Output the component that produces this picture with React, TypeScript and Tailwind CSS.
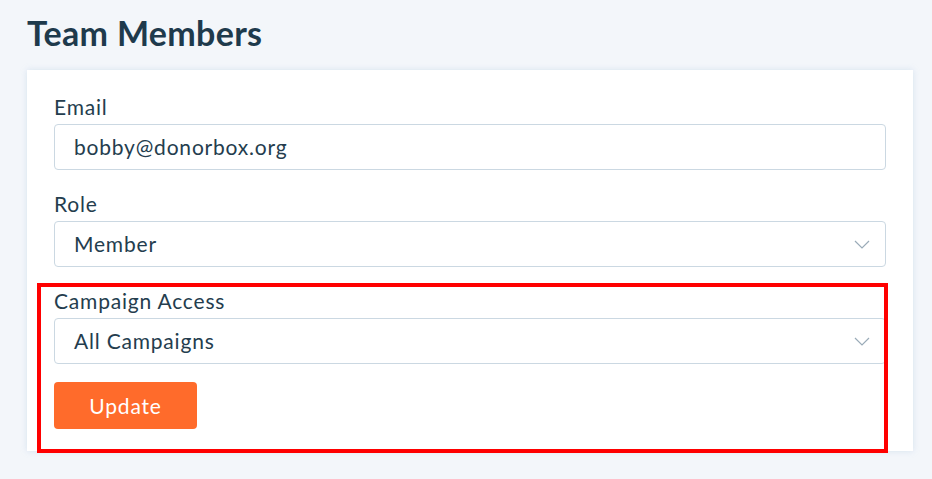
import React from "react";

function Chevron() {
  return (
    <svg width="16" height="9" viewBox="0 0 16 9" fill="none" className="shrink-0">
      <path d="M1 1l7 7 7-7" stroke="#9aabb8" strokeWidth="1.2" />
    </svg>
  );
}

function Field({ label, value, select }: { label: string; value: string; select?: boolean }) {
  return (
    <div className="flex flex-col">
      <div className="text-[21px] leading-[28px] tracking-[0.8px] text-[#243d4e] mb-[3px]">{label}</div>
      <div className="h-[46px] border border-[#cbd8e2] rounded-[4px] bg-white flex items-center pl-[19px] pr-[15px] justify-between">
        <span className="text-[21px] tracking-[0.8px] text-[#243d4e]">{value}</span>
        {select && <Chevron />}
      </div>
    </div>
  );
}

export default function App() {
  return (
    <div
      className="relative w-[932px] h-[479px] bg-[#f3f6fa] pl-[27px] pr-[19px] pt-[13px] overflow-hidden"
      style={{ fontFamily: "Lato, 'Noto Sans', sans-serif" }}
    >
      <h1 className="text-[34px] leading-[40px] font-bold tracking-[0.3px] text-[#1e3a4c]">Team Members</h1>
      <div className="mt-[17px] bg-white shadow-[0_0_6px_rgba(160,190,220,0.35)] pt-[23px] pb-[22px] pl-[27px] pr-[27px] flex flex-col gap-[20px]">
        <Field label="Email" value="bobby@donorbox.org" />
        <Field label="Role" value="Member" select />
        <div className="flex flex-col gap-[18px]">
          <Field label="Campaign Access" value="All Campaigns" select />
          <div>
            <button className="w-[143px] h-[47px] bg-[#ff6b2b] rounded-[4px] text-white text-[21px] tracking-[0.8px]">Update</button>
          </div>
        </div>
      </div>
      <div className="absolute left-[37px] top-[283px] w-[851px] h-[170px] border-[4px] border-[#ff0000] pointer-events-none" />
    </div>
  );
}
